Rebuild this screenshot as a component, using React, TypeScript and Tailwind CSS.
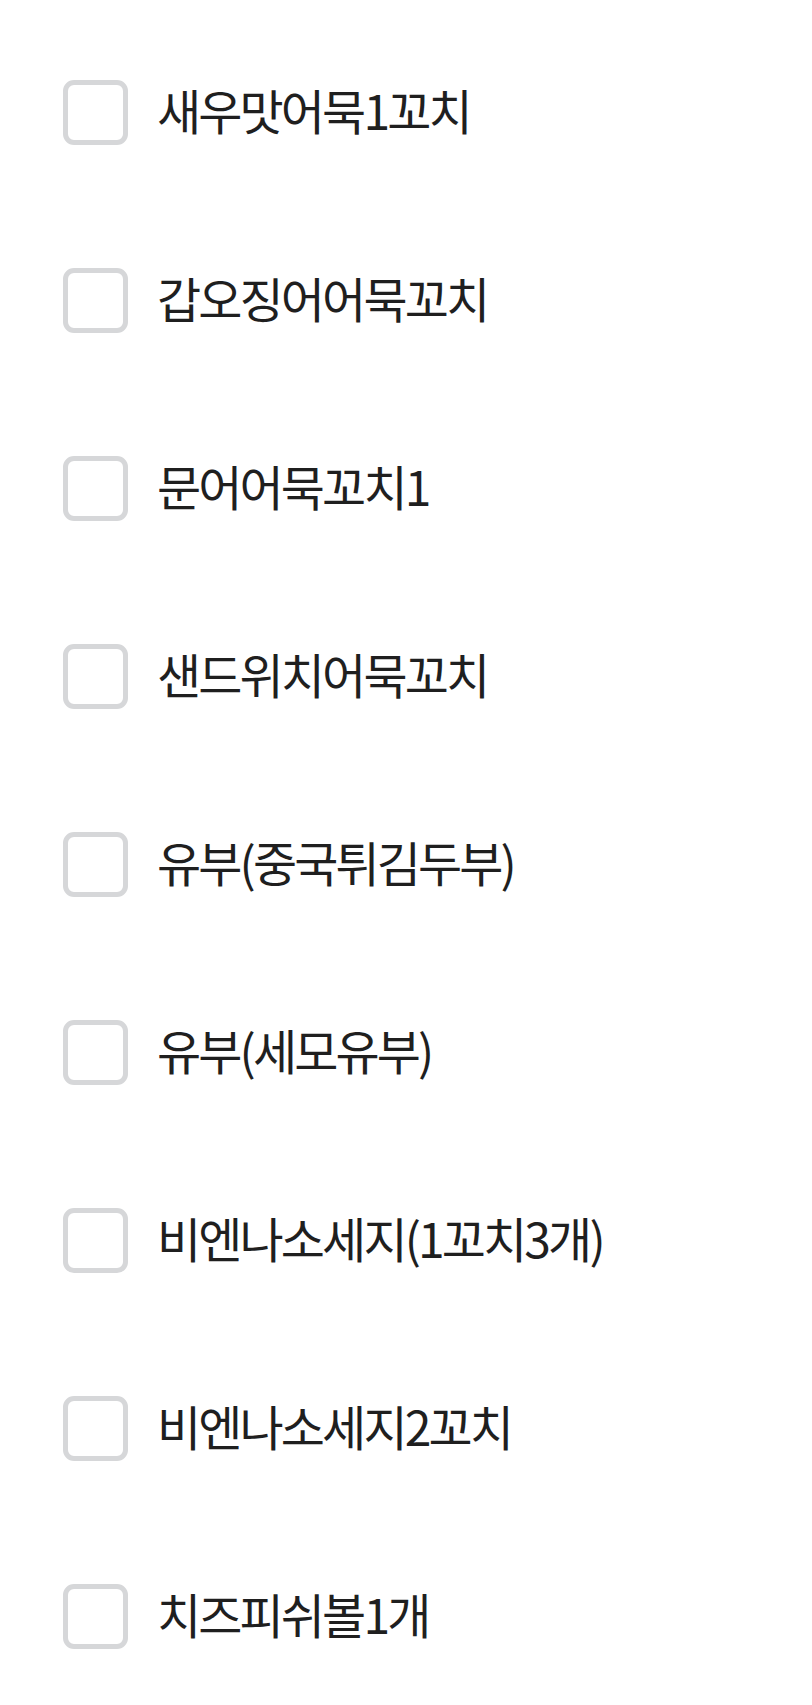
const items = [
  '새우맛어묵1꼬치',
  '갑오징어어묵꼬치',
  '문어어묵꼬치1',
  '샌드위치어묵꼬치',
  '유부(중국튀김두부)',
  '유부(세모유부)',
  '비엔나소세지(1꼬치3개)',
  '비엔나소세지2꼬치',
  '치즈피쉬볼1개',
];

export default function App() {
  return (
    <div
      className="w-[812px] h-[1705px] bg-white pt-[18px] pl-[63px]"
      style={{ fontFamily: '"Noto Sans CJK KR", "Noto Sans", sans-serif' }}
    >
      {items.map((label) => (
        <label key={label} className="flex h-[188px] items-center gap-[29px]">
          <span className="box-border h-[65px] w-[65px] shrink-0 rounded-[11px] border-[5px] border-[#d6d7d9] bg-white" />
          <span className="mb-[7px] text-[48px] leading-none tracking-[-0.06em] text-[#1f1f1f]">{label}</span>
        </label>
      ))}
    </div>
  );
}
